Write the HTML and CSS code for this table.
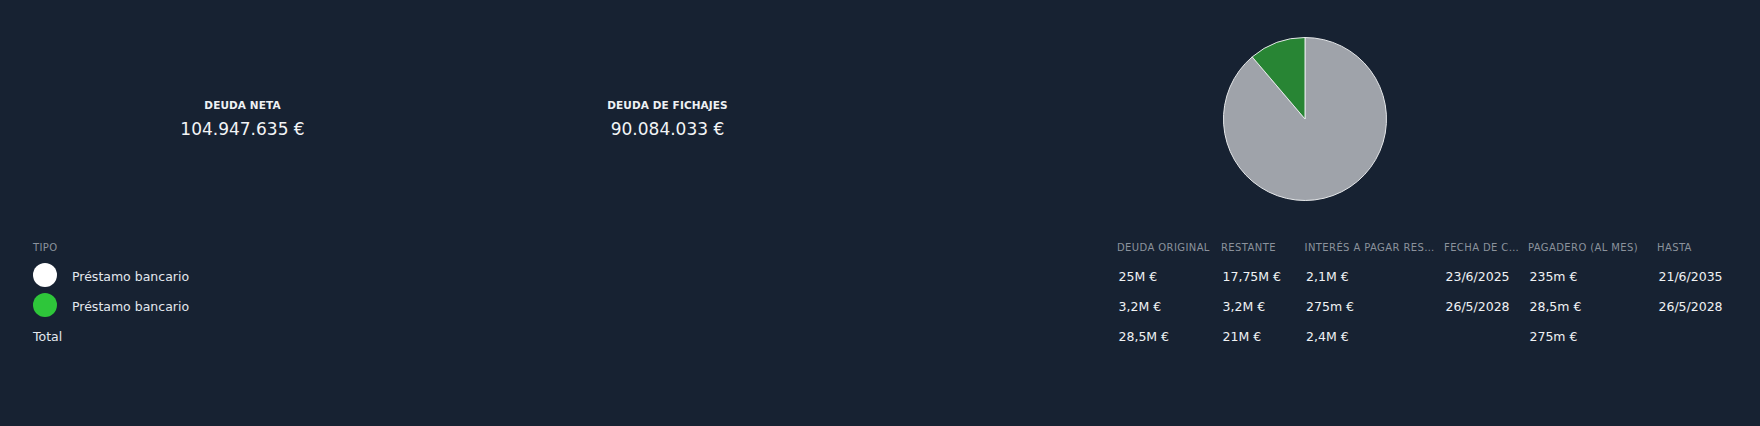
FILE: index.html
```html
<!DOCTYPE html>
<html lang="es">
<head>
<meta charset="utf-8">
<title>Deuda</title>
<link rel="stylesheet" href="styles.css">
</head>
<body>
<div class="page">
  <section class="top">
    <div class="stat">
      <div class="stat-label">DEUDA NETA</div>
      <div class="stat-value">104.947.635 €</div>
    </div>
    <div class="stat">
      <div class="stat-label">DEUDA DE FICHAJES</div>
      <div class="stat-value">90.084.033 €</div>
    </div>
    <div class="chart">
      <svg class="pie" width="164" height="164" viewBox="0 0 164 164">
        <path d="M82 82 L82 0.5 A81.5 81.5 0 1 1 29.2 19.9 Z" fill="#9fa3aa" stroke="#e6e8ea" stroke-width="1"/>
        <path d="M82 82 L29.2 19.9 A81.5 81.5 0 0 1 82 0.5 Z" fill="#288534" stroke="#e6e8ea" stroke-width="1"/>
      </svg>
    </div>
  </section>

  <section class="table">
    <div class="th">TIPO</div>
    <div class="th">DEUDA ORIGINAL</div>
    <div class="th">RESTANTE</div>
    <div class="th">INTERÉS A PAGAR RESTANTE</div>
    <div class="th">FECHA DE COMIENZO</div>
    <div class="th">PAGADERO (AL MES)</div>
    <div class="th">HASTA</div>

    <div class="td tipo"><span class="dot white"></span>Préstamo bancario</div>
    <div class="td">25M €</div>
    <div class="td">17,75M €</div>
    <div class="td">2,1M €</div>
    <div class="td">23/6/2025</div>
    <div class="td">235m €</div>
    <div class="td">21/6/2035</div>

    <div class="td tipo"><span class="dot green"></span>Préstamo bancario</div>
    <div class="td">3,2M €</div>
    <div class="td">3,2M €</div>
    <div class="td">275m €</div>
    <div class="td">26/5/2028</div>
    <div class="td">28,5m €</div>
    <div class="td">26/5/2028</div>

    <div class="td total">Total</div>
    <div class="td">28,5M €</div>
    <div class="td">21M €</div>
    <div class="td">2,4M €</div>
    <div class="td"></div>
    <div class="td">275m €</div>
    <div class="td"></div>
  </section>
</div>
</body>
</html>
```

FILE: styles.css
```css
* { box-sizing: border-box; }

html, body {
  margin: 0;
  padding: 0;
  background: #172232;
  color: #eef1f4;
  font-family: "DejaVu Sans", "Noto Sans", sans-serif;
  width: 1760px;
  height: 426px;
  overflow: hidden;
}

.page {
  padding: 37px 30px 0 30px;
}

.top {
  display: grid;
  grid-template-columns: 425px 425px 850px;
  align-items: center;
  height: 164px;
}

.stat {
  display: flex;
  flex-direction: column;
  align-items: center;
  gap: 6px;
}

.stat-label {
  font-size: 10.5px;
  font-weight: bold;
  line-height: 13px;
  color: #eef1f4;
  letter-spacing: 0.1px;
}

.stat-value {
  font-size: 17px;
  font-weight: normal;
  line-height: 22px;
  color: #f2f4f6;
}

.chart {
  display: flex;
  justify-content: center;
  align-items: center;
  height: 164px;
}

.pie { display: block; }

.table {
  margin-top: 37px;
  display: grid;
  grid-template-columns: 1084px 104px 83.6px 139.4px 84px 129px 76px;
  grid-template-rows: 24px;
  grid-auto-rows: 30px;
}

.th {
  font-size: 10px;
  letter-spacing: 0.4px;
  color: #8b929c;
  line-height: 19px;
  padding: 0 2px 0 3px;
  white-space: nowrap;
  overflow: hidden;
  text-overflow: ellipsis;
  min-width: 0;
}

.td {
  font-size: 12.5px;
  line-height: 30px;
  color: #f0f2f4;
  padding: 0 2px 0 4.5px;
  white-space: nowrap;
  overflow: hidden;
  text-overflow: ellipsis;
  min-width: 0;
}

.tipo {
  display: flex;
  align-items: center;
  padding-left: 3px;
  gap: 15px;
  color: #e3e8ee;
}

.total {
  padding-left: 3px;
  color: #e3e8ee;
}

.dot {
  width: 24px;
  height: 24px;
  border-radius: 50%;
  flex: none;
  margin-top: -4px;
}

.dot.white { background: #ffffff; }
.dot.green { background: #2ec63a; }
```
